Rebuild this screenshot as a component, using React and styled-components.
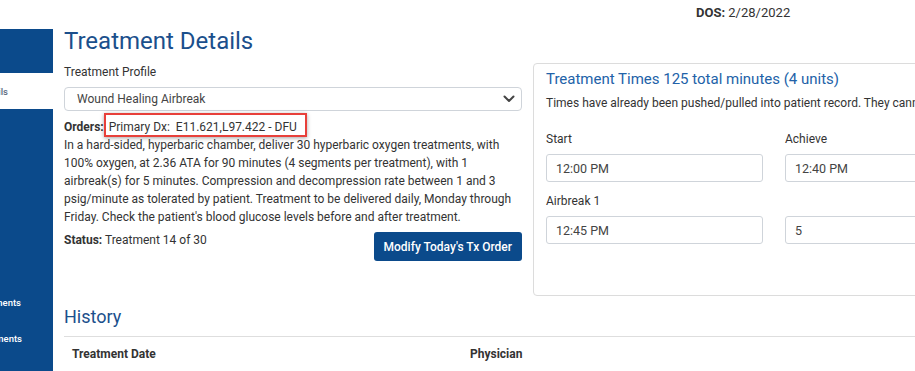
import React from "react";
import styled, { createGlobalStyle } from "styled-components";

const GlobalStyle = createGlobalStyle`
  html, body { margin: 0; padding: 0; background: #fff; }
  body {
    font-family: Roboto, "Liberation Sans", Arial, sans-serif;
    color: #333;
    overflow: hidden;
  }
  * { box-sizing: border-box; }
`;

const Page = styled.div`
  width: 915px;
  height: 371px;
  overflow: hidden;
  display: flex;
  flex-direction: column;
`;

const TopBar = styled.header`
  flex: none;
  height: 25px;
  display: flex;
  justify-content: flex-end;
  padding-top: 4px;
  font-size: 13px;
  line-height: 18px;
  color: #333;
`;

const DosBlock = styled.div`
  width: 219px;
  b { font-weight: 700; }
`;

const Body = styled.div`
  flex: 1;
  display: flex;
  min-height: 0;
`;

const Sidebar = styled.nav`
  flex: none;
  width: 53px;
  margin-top: 4px;
  background: #0b4a8b;
  display: flex;
  flex-direction: column;
  overflow: hidden;
`;

const NavLink = styled.div`
  height: ${(p) => p.$h}px;
  display: flex;
  align-items: center;
  justify-content: flex-end;
  padding-right: ${(p) => p.$pr}px;
  white-space: nowrap;
  overflow: hidden;
  font-size: 9.5px;
  font-weight: 500;
  background: ${(p) => (p.$active ? "#fff" : "transparent")};
  color: ${(p) => (p.$active ? "#5b6b80" : "#fff")};
`;

const NavSpacer = styled.div`
  height: ${(p) => p.$h}px;
`;

const Main = styled.main`
  flex: 1;
  min-width: 0;
  padding-left: 11px;
  overflow: hidden;
`;

const PageTitle = styled.h1`
  margin: 0;
  font-size: 24px;
  font-weight: 400;
  line-height: 32px;
  color: #1b4f8c;
`;

const Columns = styled.div`
  display: flex;
  gap: 11px;
  margin-top: 6px;
  align-items: flex-start;
`;

const LeftCol = styled.section`
  flex: none;
  width: 458px;
  display: flex;
  flex-direction: column;
`;

const FieldLabel = styled.div`
  font-size: 12px;
  line-height: 18px;
  color: #333;
`;

const FakeSelect = styled.div`
  margin-top: 6px;
  height: 24px;
  border: 1px solid #cfd4da;
  border-radius: 4px;
  display: flex;
  align-items: center;
  justify-content: space-between;
  padding: 0 6px 0 12px;
  font-size: 12px;
  color: #444;
`;

const Orders = styled.p`
  margin: 7px 0 0;
  font-size: 12px;
  line-height: 18px;
  color: #333;
  b { font-weight: 700; }
`;

const Highlight = styled.span`
  border: 2px solid #e8403a;
  padding: 5px 8px 1px 3px;
  box-shadow: 0 1px 4px rgba(0, 0, 0, 0.35);
  white-space: pre;
`;

const StatusRow = styled.div`
  margin-top: 5px;
  display: flex;
  justify-content: space-between;
  align-items: flex-start;
  font-size: 12px;
  line-height: 18px;
  b { font-weight: 700; }
`;

const PrimaryButton = styled.button`
  margin-top: 1px;
  height: 29px;
  padding: 0 10px;
  border: none;
  border-radius: 3px;
  background: #0b4a8b;
  color: #fff;
  font-family: Roboto, "Liberation Sans", Arial, sans-serif;
  font-size: 12px;
  font-weight: 500;
  cursor: pointer;
`;

const Card = styled.section`
  flex: none;
  width: 482px;
  height: 233px;
  border: 1px solid #dcdcdc;
  border-radius: 4px;
  padding: 5px 12px;
`;

const CardTitle = styled.h2`
  margin: 0;
  font-size: 15px;
  font-weight: 400;
  line-height: 20px;
  color: #2262a8;
  white-space: nowrap;
`;

const CardNote = styled.div`
  margin-top: 5px;
  font-size: 12px;
  line-height: 18px;
  color: #333;
  white-space: nowrap;
`;

const TimeGrid = styled.div`
  margin-top: 18px;
  display: grid;
  grid-template-columns: 217px 217px;
  column-gap: 22px;
  row-gap: 10px;
`;

const TimeField = styled.div`
  display: flex;
  flex-direction: column;
  gap: 6px;
`;

const TextInput = styled.input`
  height: 28px;
  width: 100%;
  border: 1px solid #cfd4da;
  border-radius: 3px;
  padding: 0 9px;
  font-family: Roboto, "Liberation Sans", Arial, sans-serif;
  font-size: 12.5px;
  color: #444;
  background: #fff;
  outline: none;
`;

const History = styled.section`
  margin-top: 9px;
`;

const HistoryTitle = styled.h2`
  margin: 0;
  font-size: 18px;
  font-weight: 400;
  line-height: 24px;
  color: #1b4f8c;
  padding-bottom: 7px;
  border-bottom: 1px solid #dedede;
`;

const TableHead = styled.div`
  display: grid;
  grid-template-columns: 398px 1fr;
`;

const HeadCell = styled.div`
  padding: 8px;
  font-size: 12px;
  line-height: 18px;
  font-weight: 700;
  color: #333;
`;

const Chevron = () => (
  <svg width="12" height="8" viewBox="0 0 12 8" aria-hidden="true">
    <path d="M1.5 1.5 L6 6 L10.5 1.5" fill="none" stroke="#444" strokeWidth="2" strokeLinecap="round" strokeLinejoin="round" />
  </svg>
);

const timeFields = [
  { label: "Start", value: "12:00 PM" },
  { label: "Achieve", value: "12:40 PM" },
  { label: "Airbreak 1", value: "12:45 PM" },
  { label: "\u00a0", value: "5" },
];

export default function App() {
  return (
    <Page>
      <GlobalStyle />
      <TopBar>
        <DosBlock>
          <b>DOS:</b> 2/28/2022
        </DosBlock>
      </TopBar>
      <Body>
        <Sidebar>
          <NavSpacer $h={44} />
          <NavLink $h={36} $pr={45} $active>Treatment Details</NavLink>
          <NavSpacer $h={175} />
          <NavLink $h={36} $pr={32}>Wound Assessments</NavLink>
          <NavLink $h={36} $pr={31}>Pain Assessments</NavLink>
        </Sidebar>
        <Main>
          <PageTitle>Treatment Details</PageTitle>
          <Columns>
            <LeftCol>
              <FieldLabel>Treatment Profile</FieldLabel>
              <FakeSelect>
                <span>Wound Healing Airbreak</span>
                <Chevron />
              </FakeSelect>
              <Orders>
                <b>Orders:</b>
                <Highlight>Primary Dx:  E11.621,L97.422 - DFU</Highlight>
                <br />
                In a hard-sided, hyperbaric chamber, deliver 30 hyperbaric oxygen treatments, with
                100% oxygen, at 2.36 ATA for 90 minutes (4 segments per treatment), with 1
                airbreak(s) for 5 minutes. Compression and decompression rate between 1 and 3
                psig/minute as tolerated by patient. Treatment to be delivered daily, Monday through
                Friday. Check the patient's blood glucose levels before and after treatment.
              </Orders>
              <StatusRow>
                <span>
                  <b>Status:</b> Treatment 14 of 30
                </span>
                <PrimaryButton type="button">Modify Today's Tx Order</PrimaryButton>
              </StatusRow>
            </LeftCol>
            <Card>
              <CardTitle>Treatment Times 125 total minutes (4 units)</CardTitle>
              <CardNote>
                Times have already been pushed/pulled into patient record. They cannot be changed here.
              </CardNote>
              <TimeGrid>
                {timeFields.map((f, i) => (
                  <TimeField key={i}>
                    <FieldLabel>{f.label}</FieldLabel>
                    <TextInput readOnly defaultValue={f.value} />
                  </TimeField>
                ))}
              </TimeGrid>
            </Card>
          </Columns>
          <History>
            <HistoryTitle>History</HistoryTitle>
            <TableHead>
              <HeadCell>Treatment Date</HeadCell>
              <HeadCell>Physician</HeadCell>
            </TableHead>
          </History>
        </Main>
      </Body>
    </Page>
  );
}
